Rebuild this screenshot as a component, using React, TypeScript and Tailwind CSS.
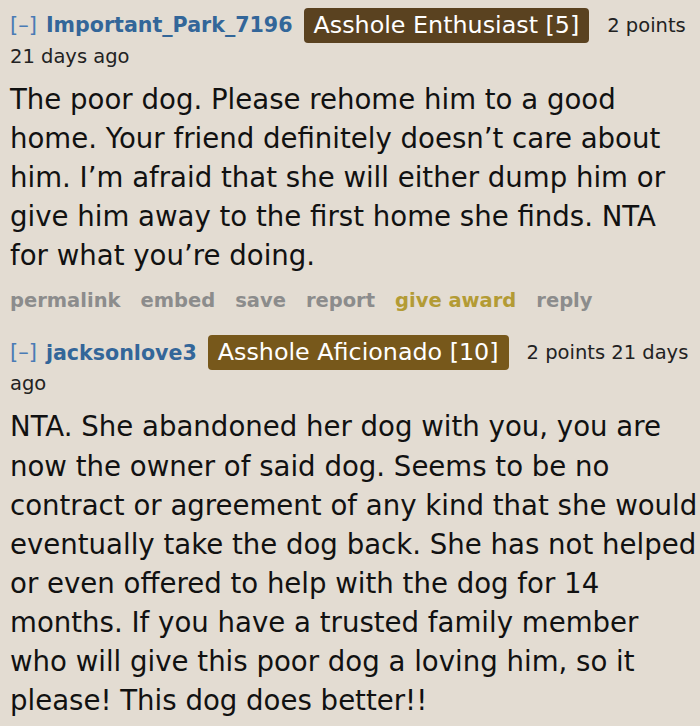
import React from 'react';

interface Comment {
  id: string;
  author: string;
  flair: string;
  flairBg: string;
  metaInline: string;
  metaWrap: string;
  lines: string[];
  showButtons: boolean;
}

const comments: Comment[] = [
  {
    id: 'c1',
    author: 'Important_Park_7196',
    flair: 'Asshole Enthusiast [5]',
    flairBg: 'bg-[#5a4220]',
    metaInline: '2 points',
    metaWrap: '21 days ago',
    lines: [
      'The poor dog. Please rehome him to a good',
      'home. Your friend definitely doesn’t care about',
      'him. I’m afraid that she will either dump him or',
      'give him away to the first home she finds. NTA',
      'for what you’re doing.',
    ],
    showButtons: true,
  },
  {
    id: 'c2',
    author: 'jacksonlove3',
    flair: 'Asshole Aficionado [10]',
    flairBg: 'bg-[#77581b]',
    metaInline: '2 points 21 days',
    metaWrap: 'ago',
    lines: [
      'NTA. She abandoned her dog with you, you are',
      'now the owner of said dog. Seems to be no',
      'contract or agreement of any kind that she would',
      'eventually take the dog back. She has not helped',
      'or even offered to help with the dog for 14',
      'months. If you have a trusted family member',
      'who will give this poor dog a loving him, so it',
      'please! This dog does better!!',
    ],
    showButtons: false,
  },
];

const buttons = ['permalink', 'embed', 'save', 'report', 'give award', 'reply'];

const App: React.FC = () => {
  return (
    <div className="w-[700px] h-[726px] overflow-hidden bg-[#e3dcd2] pl-[10px] pt-[8px] font-['DejaVu_Sans',Verdana,sans-serif]">
      {comments.map(c => (
        <div key={c.id} className={c.showButtons ? '' : 'mt-[21px]'}>
          <div className="flex items-center h-[35px] whitespace-nowrap text-[19.5px]">
            <span className="text-[#4a7bb5] text-[21px] mr-[9px]">[–]</span>
            <span className="font-bold text-[#336699] text-[20.6px]">{c.author}</span>
            <span
              className={`${c.flairBg} text-white text-[23.8px] rounded-[4px] px-[10px] h-[35px] leading-[35px] ml-[11px] mr-[18px]`}
            >
              {c.flair}
            </span>
            <span className="text-[#222]">{c.metaInline}</span>
          </div>
          <div className="text-[19.5px] leading-[26px] mt-[1px] text-[#222]">{c.metaWrap}</div>
          <div className="text-[27.6px] leading-[39.1px] text-[#111] mt-[10px] whitespace-nowrap">
            {c.lines.map((l, i) => (
              <div key={i}>{l}</div>
            ))}
          </div>
          {c.showButtons && (
            <div className="flex gap-[20px] mt-[13px] text-[19.5px] leading-[26px] font-bold">
              {buttons.map(b => (
                <span key={b} className={b === 'give award' ? 'text-[#b39b35]' : 'text-[#8c8c8c]'}>
                  {b}
                </span>
              ))}
            </div>
          )}
        </div>
      ))}
    </div>
  );
};

export default App;
